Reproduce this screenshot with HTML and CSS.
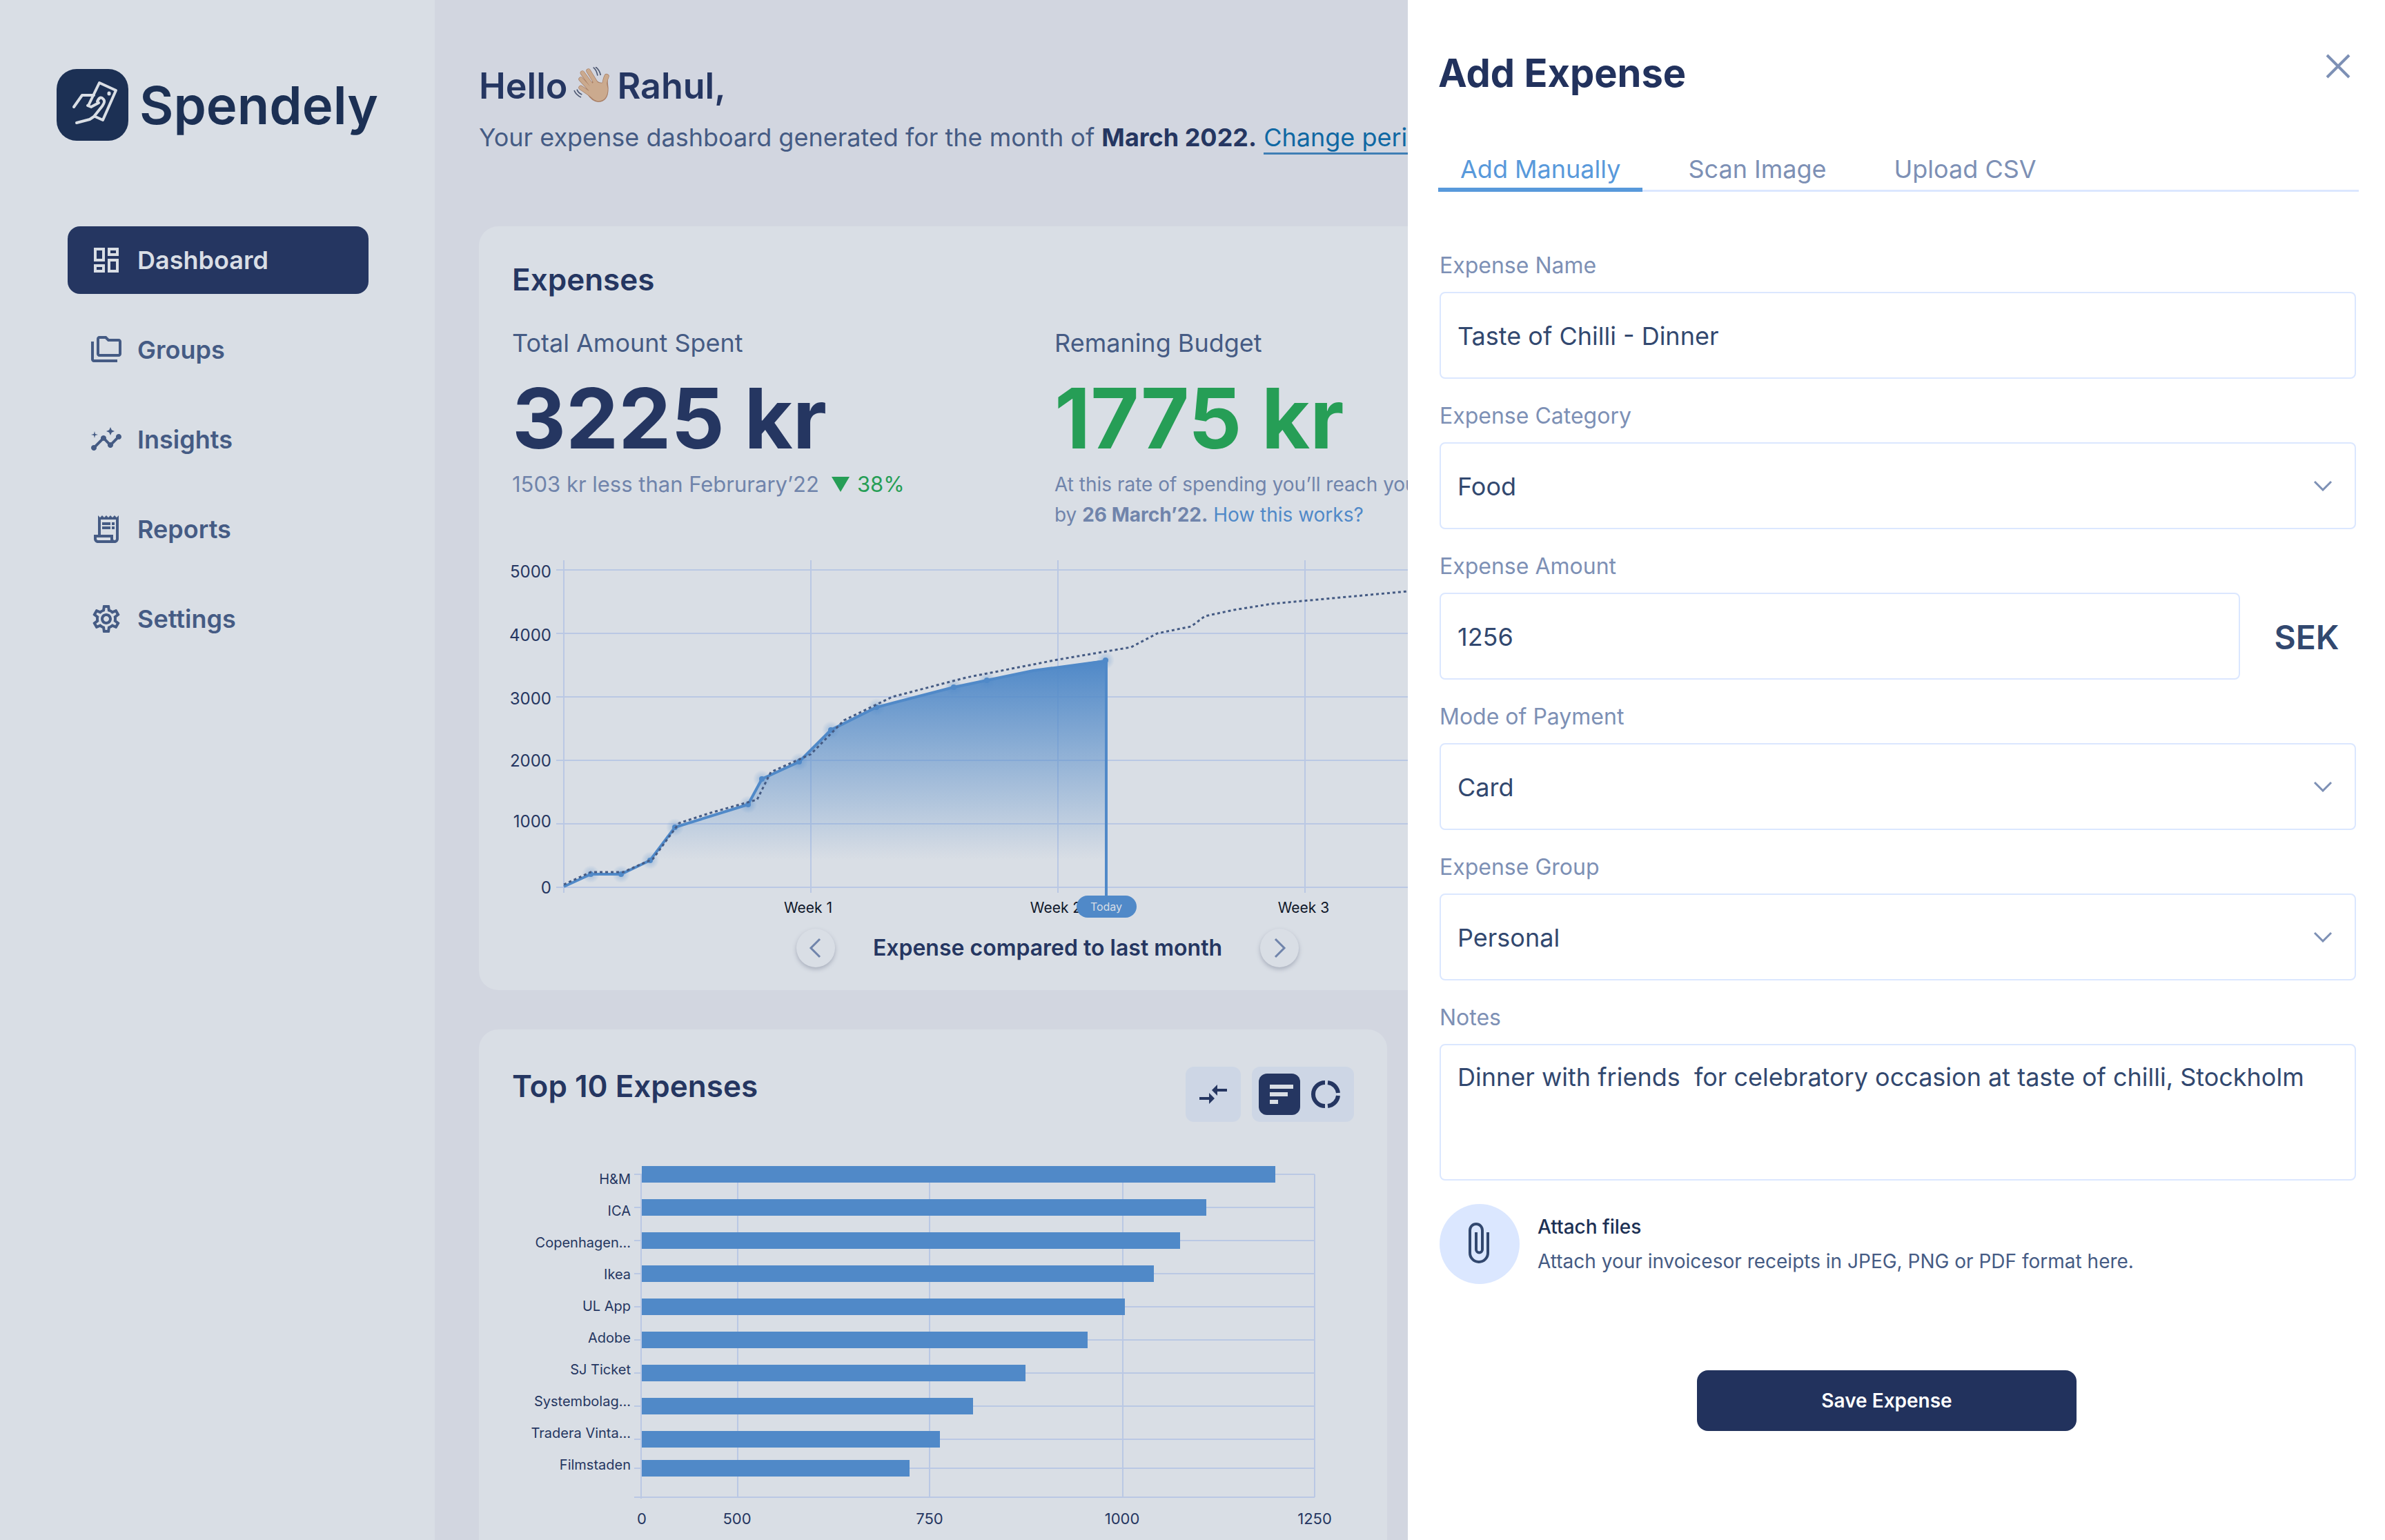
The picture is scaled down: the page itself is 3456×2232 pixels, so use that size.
FILE: index.html
```html
<!DOCTYPE html>
<html lang="en">
<head>
<meta charset="utf-8">
<title>Spendely – Add Expense</title>
<link rel="stylesheet" href="styles.css">
</head>
<body>
<div class="app">
  <aside class="sidebar">
    <a class="brand" href="#">
      <svg class="brand-mark" viewBox="0 0 104 104" aria-hidden="true">
        <rect width="104" height="104" rx="29" fill="#1c3054"/>
        <g fill="none" stroke="#d9dee5" stroke-width="4" stroke-linecap="round" stroke-linejoin="round">
          <path d="M25 55 37 38Q38 38 41 38H54"/>
          <path d="M46 53 62 20 86 31 67 74 56 69"/>
          <path d="M29 78 48 73 54 69 66 54Q71 47 68 44 63 38 59 47L61 49 50 55 45 53"/>
          <path d="M76 35v1" stroke-width="5"/>
        </g>
      </svg>
      <span>Spendely</span>
    </a>
    <nav class="nav">
      <a class="nav-item active" href="#"><svg viewBox="0 0 24 24"><path d="M19 5v2h-4V5h4M9 5v6H5V5h4m10 8v6h-4v-6h4M9 17v2H5v-2h4M21 3h-8v6h8V3zM11 3H3v10h8V3zm10 8h-8v10h8V11zm-10 4H3v6h8v-6z"/></svg>Dashboard</a>
      <a class="nav-item" href="#"><svg viewBox="0 0 24 24"><path d="M3 6H1v13c0 1.100.9 2 2 2h17v-2H3V6zm18-2h-7l-2-2H7c-1.100 0-1.990.9-1.990 2L5 15c0 1.100.9 2 2 2h14c1.100 0 2-.9 2-2V6c0-1.100-.9-2-2-2zm0 11H7V4h4.170l2 2H21v9z"/></svg>Groups</a>
      <a class="nav-item" href="#"><svg viewBox="0 0 24 24"><path d="M21 8c-1.450 0-2.260 1.440-1.930 2.510l-3.550 3.560c-.3-.09-.74-.09-1.040 0l-2.550-2.550C12.270 10.450 11.460 9 10 9c-1.450 0-2.270 1.440-1.930 2.520l-4.560 4.550C2.440 15.740 1 16.550 1 18c0 1.100.9 2 2 2 1.450 0 2.260-1.440 1.930-2.510l4.550-4.560c.3.09.74.09 1.040 0l2.550 2.550C12.730 16.550 13.540 18 15 18c1.450 0 2.270-1.440 1.930-2.520l3.560-3.550C21.560 12.260 23 11.450 23 10c0-1.100-.9-2-2-2z"/><path d="m15 9 .94-2.070L18 6l-2.060-.93L15 3l-.92 2.070L12 6l2.080.93zM3.500 11 4 9l2-.5L4 8l-.5-2L3 8l-2 .5L3 9z"/></svg>Insights</a>
      <a class="nav-item" href="#"><svg viewBox="0 0 24 24"><path d="M19.500 3.500 18 2l-1.500 1.500L15 2l-1.500 1.500L12 2l-1.500 1.500L9 2 7.500 3.500 6 2v14H3v3c0 1.660 1.340 3 3 3h12c1.660 0 3-1.340 3-3V2l-1.500 1.500zM15 20H6c-.55 0-1-.45-1-1v-1h10v2zm4-1c0 .55-.45 1-1 1s-1-.45-1-1v-3H8V5h11v14z"/><path d="M9 7h6v2H9zM16 7h2v2h-2zM9 10h6v2H9zM16 10h2v2h-2z"/></svg>Reports</a>
      <a class="nav-item" href="#"><svg viewBox="0 0 24 24"><path d="M19.430 12.980c.04-.32.07-.64.07-.98 0-.34-.03-.66-.07-.98l2.110-1.650c.19-.15.24-.42.12-.64l-2-3.460c-.09-.16-.26-.25-.44-.25-.06 0-.12.01-.17.03l-2.490 1c-.52-.4-1.080-.73-1.690-.98l-.38-2.650C14.460 2.180 14.250 2 14 2h-4c-.25 0-.46.18-.49.42l-.38 2.650c-.61.25-1.170.59-1.690.98l-2.490-1c-.06-.02-.12-.03-.18-.03-.17 0-.34.09-.43.25l-2 3.460c-.13.22-.07.49.12.64l2.110 1.650c-.04.32-.07.65-.07.98 0 .33.03.66.07.98l-2.110 1.650c-.19.15-.24.42-.12.64l2 3.460c.09.16.26.25.44.25.06 0 .12-.01.17-.03l2.490-1c.52.4 1.080.73 1.690.98l.38 2.650c.03.24.24.42.49.42h4c.25 0 .46-.18.49-.42l.38-2.650c.61-.25 1.170-.59 1.690-.98l2.490 1c.06.02.12.03.18.03.17 0 .34-.09.43-.25l2-3.460c.12-.22.07-.49-.12-.64l-2.110-1.650zm-1.980-1.710c.04.31.05.52.05.73 0 .21-.02.43-.05.73l-.14 1.130.89.7 1.080.84-.7 1.210-1.270-.51-1.040-.42-.9.68c-.43.32-.84.56-1.250.73l-1.060.43-.16 1.130-.2 1.350h-1.400l-.19-1.350-.16-1.130-1.060-.43c-.43-.18-.83-.41-1.230-.71l-.91-.7-1.060.43-1.270.51-.7-1.210 1.080-.84.89-.7-.14-1.130c-.03-.31-.05-.54-.05-.74s.02-.43.05-.73l.14-1.130-.89-.7-1.080-.84.7-1.210 1.270.51 1.040.42.9-.68c.43-.32.84-.56 1.250-.73l1.060-.43.16-1.130.2-1.350h1.390l.19 1.350.16 1.130 1.060.43c.43.18.83.41 1.230.71l.91.7 1.060-.43 1.270-.51.7 1.210-1.070.85-.89.7.14 1.130zM12 8c-2.210 0-4 1.790-4 4s1.790 4 4 4 4-1.790 4-4-1.790-4-4-4zm0 6c-1.100 0-2-.9-2-2s.9-2 2-2 2 .9 2 2-.9 2-2 2z"/></svg>Settings</a>
    </nav>
  </aside>

  <main class="main">
    <header class="greeting">
      <h1>Hello
        <svg class="wave" viewBox="36 36 168 168" role="img" aria-label="waving hand">
          <g fill="none" stroke-linecap="round">
            <path d="M104 53 140 112M78 62 122 122M71 89 116 138M71 126 120 160" stroke="#a87f66" stroke-width="20"/>
            <path d="M183 77Q174 96 172 130" stroke="#a87f66" stroke-width="22"/>
          </g>
          <path d="M98 118 134 88Q146 106 164 104L188 84Q188 108 191 128 192 188 145 189 118 186 98 154Z" fill="#a87f66"/>
          <g fill="none" stroke="#cbaa8e" stroke-linecap="round">
            <path d="M104 53 140 112M78 62 122 122M71 89 116 138M71 126 120 160" stroke-width="16"/>
            <path d="M183 77Q174 96 172 130" stroke-width="18"/>
          </g>
          <path d="M108 122 132 96Q146 108 166 106L182 100Q184 114 188 130 188 184 145 185 122 180 104 152Z" fill="#cbaa8e"/>
          <path d="M125 38Q139 48 144 74M135 36Q152 48 157 72M42 138Q50 158 72 168M54 134Q60 150 76 156" fill="none" stroke="#4d5872" stroke-width="5"/>
        </svg>
        Rahul,</h1>
      <p>Your expense dashboard generated for the month of <strong>March 2022.</strong> <a href="#">Change period</a></p>
    </header>

    <section class="card">
      <h2>Expenses</h2>
      <div class="stats">
        <div class="stat">
          <p class="stat-label">Total Amount Spent</p>
          <p class="stat-value">3225 kr</p>
          <p class="stat-note">1503 kr less than Februrary’22 <span class="trend"><svg viewBox="0 0 26 22" aria-hidden="true"><path d="M0 0H26L13 22Z"/></svg>38%</span></p>
        </div>
        <div class="stat">
          <p class="stat-label">Remaning Budget</p>
          <p class="stat-value good">1775 kr</p>
          <p class="stat-hint">At this rate of spending you’ll reach your budget<br>by <strong>26 March’22.</strong> <a href="#">How this works?</a></p>
        </div>
      </div>
      <svg class="trend-chart" viewBox="742 800 1900 540" role="img" aria-label="Expense compared to last month">
        <defs>
          <linearGradient id="fill" gradientUnits="userSpaceOnUse" x1="0" y1="960" x2="0" y2="1247">
            <stop offset="0" stop-color="#5089c8"/><stop offset="1" stop-color="#5089c8" stop-opacity="0"/>
          </linearGradient>
          <radialGradient id="glow"><stop offset="0" stop-color="#5089c8" stop-opacity=".4"/><stop offset="1" stop-color="#5089c8" stop-opacity="0"/></radialGradient>
        </defs>
        <path class="grid" d="M806 826H2640M806 918H2640M806 1010H2640M806 1102H2640M806 1194H2640M806 1286H2640M817 812V1294M1175 812V1294M1533 812V1294M1891 812V1294M2249 812V1294"/>
        <g class="y-labels"><text x="799" y="837">5000</text><text x="799" y="929">4000</text><text x="799" y="1021">3000</text><text x="799" y="1111">2000</text><text x="799" y="1199">1000</text><text x="799" y="1295">0</text></g>
        <g class="week-labels"><text x="1171" y="1323">Week 1</text><text x="1530" y="1323">Week 2</text><text x="1889" y="1323">Week 3</text></g>
        <path fill="url(#fill)" d="M817 1285 856 1267H900L942 1247 978 1199 1084 1166 1104 1129 1158 1104 1204 1058 1270 1025 1382 996 1430 986 1497 972 1602 956V1285Z"/>
        <g fill="url(#glow)"><circle cx="856" cy="1267" r="13"/><circle cx="900" cy="1267" r="13"/><circle cx="942" cy="1247" r="13"/><circle cx="978" cy="1199" r="13"/><circle cx="1084" cy="1166" r="13"/><circle cx="1104" cy="1129" r="13"/><circle cx="1158" cy="1104" r="13"/><circle cx="1204" cy="1058" r="13"/><circle cx="1270" cy="1025" r="13"/><circle cx="1382" cy="996" r="13"/><circle cx="1430" cy="986" r="13"/><circle cx="1602" cy="957" r="13"/></g>
        <path class="spend" d="M817 1285 856 1267H900L942 1247 978 1199 1084 1166 1104 1129 1158 1104 1204 1058 1270 1025 1382 996 1430 986 1497 972 1602 958"/>
        <path class="spend" d="M1603 957V1300"/>
        <g fill="#5089c8"><circle cx="856" cy="1267" r="4"/><circle cx="900" cy="1267" r="4"/><circle cx="942" cy="1247" r="4"/><circle cx="978" cy="1199" r="4"/><circle cx="1084" cy="1166" r="4"/><circle cx="1104" cy="1129" r="4"/><circle cx="1158" cy="1104" r="4"/><circle cx="1204" cy="1058" r="4"/><circle cx="1270" cy="1025" r="4"/><circle cx="1382" cy="996" r="4"/><circle cx="1430" cy="986" r="4"/><circle cx="1602" cy="957" r="4"/></g>
        <path class="previous" d="M817 1282 856 1264H903L946 1245 984 1193 1030 1178 1097 1159 1117 1119 1175 1093 1223 1044 1293 1010 1400 982 1533 956 1639 938 1677 918 1726 908 1746 893 1788 884 1844 875 2040 857 2249 840"/>
        <rect x="1560" y="1298" width="87" height="32" rx="16" fill="#5089c8"/>
        <text class="today" x="1603" y="1320">Today</text>
      </svg>
      <div class="pager">
        <button type="button" aria-label="Previous chart"><svg viewBox="0 0 56 56"><path d="M34 15 21 28 34 41"/></svg></button>
        <span>Expense compared to last month</span>
        <button type="button" aria-label="Next chart"><svg viewBox="0 0 56 56"><path d="M22 15 35 28 22 41"/></svg></button>
      </div>
    </section>

    <section class="card top-card">
      <div class="card-head">
        <h2>Top 10 Expenses</h2>
        <div class="tools">
          <button class="tool" type="button" aria-label="Compare"><svg viewBox="0 0 24 24"><path d="M9.010 14H2v2h7.010v3L13 15l-3.990-4v3zm5.980-1v-3H22V8h-7.010V5L11 9l3.990 4z"/></svg></button>
          <div class="toggle">
            <button class="view on" type="button" aria-label="Bar chart"><svg viewBox="0 0 60 60"><path d="M16 16h34v6H16zM16 27h26v6H16zM16 38h12v6H16z"/></svg></button>
            <button class="view" type="button" aria-label="Donut chart"><svg viewBox="0 0 60 60"><g fill="none" stroke="#253661" stroke-width="6"><path d="M32 13A17 17 0 0 1 47 28M47 32A17 17 0 0 1 32 47M28 47A17 17 0 0 1 28 13"/></g></svg></button>
          </div>
        </div>
      </div>
      <svg class="bar-chart" viewBox="742 1626 1220 600" role="img" aria-label="Top 10 expenses by amount">
        <path class="grid" d="M919 1702H1905M919 1750H1905M919 1798H1905M919 1846H1905M919 1894H1905M919 1942H1905M919 1990H1905M919 2038H1905M919 2086H1905M919 2128H1905M919 2170H1905M929 1702V2172M1069 1702V2170M1347 1702V2170M1627 1702V2170M1905 1702V2170"/>
        <g fill="#5089c8"><rect x="930" y="1690" width="918" height="24"/><rect x="930" y="1738" width="818" height="24"/><rect x="930" y="1786" width="780" height="24"/><rect x="930" y="1834" width="742" height="24"/><rect x="930" y="1882" width="700" height="24"/><rect x="930" y="1930" width="646" height="24"/><rect x="930" y="1978" width="556" height="24"/><rect x="930" y="2026" width="480" height="24"/><rect x="930" y="2074" width="432" height="24"/><rect x="930" y="2116" width="388" height="24"/></g>
        <g class="bar-labels"><text x="914" y="1716">H&amp;M</text><text x="914" y="1762">ICA</text><text x="914" y="1808">Copenhagen...</text><text x="914" y="1854">Ikea</text><text x="914" y="1900">UL App</text><text x="914" y="1946">Adobe</text><text x="914" y="1992">SJ Ticket</text><text x="914" y="2038">Systembolag...</text><text x="914" y="2084">Tradera Vinta...</text><text x="914" y="2130">Filmstaden</text></g>
        <g class="x-labels"><text x="930" y="2209">0</text><text x="1068" y="2209">500</text><text x="1347" y="2209">750</text><text x="1626" y="2209">1000</text><text x="1905" y="2209">1250</text></g>
      </svg>
    </section>
  </main>

  <aside class="drawer" role="dialog" aria-labelledby="drawer-title">
    <header class="drawer-head">
      <h2 id="drawer-title">Add Expense</h2>
      <button type="button" aria-label="Close"><svg viewBox="0 0 36 36"><path d="M2 2 34 34M34 2 2 34"/></svg></button>
    </header>
    <div class="tabs" role="tablist">
      <button class="tab selected" type="button" role="tab" aria-selected="true">Add Manually</button>
      <button class="tab" type="button" role="tab">Scan Image</button>
      <button class="tab" type="button" role="tab">Upload CSV</button>
    </div>
    <form class="form">
      <div class="field"><label for="name">Expense Name</label><input class="control" id="name" type="text" value="Taste of Chilli - Dinner"></div>
      <div class="field"><label for="category">Expense Category</label>
        <div class="select"><select class="control" id="category"><option>Food</option></select><svg viewBox="0 0 28 16"><path d="M2 2 14 14 26 2"/></svg></div></div>
      <div class="field"><label for="amount">Expense Amount</label>
        <div class="amount"><input class="control" id="amount" type="text" value="1256"><span>SEK</span></div></div>
      <div class="field"><label for="mode">Mode of Payment</label>
        <div class="select"><select class="control" id="mode"><option>Card</option></select><svg viewBox="0 0 28 16"><path d="M2 2 14 14 26 2"/></svg></div></div>
      <div class="field"><label for="group">Expense Group</label>
        <div class="select"><select class="control" id="group"><option>Personal</option></select><svg viewBox="0 0 28 16"><path d="M2 2 14 14 26 2"/></svg></div></div>
      <div class="field"><label for="notes">Notes</label><textarea class="control" id="notes">Dinner with friends  for celebratory occasion at taste of chilli, Stockholm</textarea></div>
      <div class="attach">
        <button type="button" aria-label="Attach files"><svg viewBox="0 0 116 116"><path d="M70 41V71A13 13 0 0 1 44 71V38A9 9 0 0 1 62 38V66A4.500 4.500 0 0 1 53 66V41"/></svg></button>
        <div><p class="attach-title">Attach files</p><p class="attach-text">Attach your invoicesor receipts in JPEG, PNG or PDF format here.</p></div>
      </div>
      <button class="save" type="submit">Save Expense</button>
    </form>
  </aside>
</div>
</body>
</html>
```
FILE: styles.css
```css
* { box-sizing: border-box; }
body {
  margin: 0;
  font-family: Inter, "Liberation Sans", sans-serif;
  color: #253661;
  background: #d2d6e0;
}
h1, h2, p { margin: 0; }
a { color: inherit; text-decoration: none; }
button { padding: 0; border: 0; background: none; font: inherit; color: inherit; cursor: pointer; }
svg { display: block; }

.app { display: flex; height: 100vh; overflow: hidden; position: relative; }

/* Sidebar */
.sidebar { flex: none; width: 630px; padding: 100px 82px; background: #d9dee5; }
.brand { display: flex; align-items: center; gap: 16px; font-size: 76px; line-height: 104px; font-weight: 600; color: #1c3054; }
.brand-mark { flex: none; width: 104px; height: 104px; }
.nav { display: flex; flex-direction: column; gap: 32px; margin: 124px -4px 0 16px; }
.nav-item { display: flex; align-items: center; gap: 21px; width: 436px; height: 98px; padding: 0 32px; border-radius: 18px; font-size: 36px; line-height: 48px; font-weight: 600; color: #455b84; }
.nav-item svg { width: 48px; height: 48px; fill: currentColor; }
.nav-item.active { background: #253661; color: #d9dee5; }

/* Dashboard */
.main { flex: 1; min-width: 0; padding: 93px 64px 0; display: flex; flex-direction: column; }
.greeting { margin-bottom: 105px; white-space: nowrap; }
.greeting h1 { display: flex; align-items: center; gap: 8px; margin-bottom: 18px; font-size: 52px; line-height: 64px; font-weight: 600; }
.wave { width: 56px; height: 56px; }
.greeting p { font-size: 36px; line-height: 48px; color: #455b84; }
.greeting strong { color: #253661; }
.greeting a { color: #0f68a3; border-bottom: 3px solid #3f7fb5; }
.card { flex: none; padding: 49px 48px 33px; border-radius: 28px; background: #d9dee5; }
.card h2 { font-size: 44px; line-height: 56px; font-weight: 600; }
.stats { display: flex; margin-top: 40px; white-space: nowrap; }
.stat { flex: none; width: 786px; height: 295px; }
.stat-label { font-size: 36px; line-height: 48px; color: #455b84; }
.stat-value { margin: 25px 0 14px; font-size: 121px; line-height: 120px; font-weight: 700; }
.stat-value.good { color: #269e56; }
.stat-note { display: flex; gap: 18px; font-size: 31px; line-height: 44px; color: #7084ab; }
.trend { display: flex; align-items: center; gap: 11px; color: #269e56; }
.trend svg { width: 26px; height: 22px; fill: currentColor; }
.stat-hint { font-size: 28px; line-height: 44px; color: #7084ab; }
.stat-hint a { color: #5089c8; }
.trend-chart { width: 1900px; height: 540px; margin-top: 32px; overflow: visible; }
.grid { fill: none; stroke: #bac8e4; stroke-width: 2; }
.spend { fill: none; stroke: #5089c8; stroke-width: 4; }
.previous { fill: none; stroke: #455b84; stroke-width: 3; stroke-dasharray: 4 4; }
.y-labels { font-size: 24px; fill: #253661; text-anchor: end; }
.week-labels { font-size: 21px; fill: #0f172a; text-anchor: middle; }
.today { font-size: 16px; fill: #d9dee5; text-anchor: middle; }
.pager { display: flex; align-items: center; margin: 6px 0 0 412px; font-size: 32px; line-height: 56px; font-weight: 600; }
.pager span { width: 616px; text-align: center; white-space: nowrap; }
.pager button { width: 56px; height: 56px; border-radius: 50%; background: #d9dee5; box-shadow: 0 3px 6px #a9afbd; }
.pager svg { fill: none; stroke: #7084ab; stroke-width: 3; }

.top-card { width: 1316px; margin-top: 57px; padding: 54px 48px 48px; }
.card-head { display: flex; justify-content: space-between; align-items: flex-start; }
.tools { display: flex; gap: 16px; }
.tool { display: grid; place-items: center; width: 80px; height: 80px; border-radius: 12px; background: #cdd6e5; }
.tool svg { width: 48px; height: 48px; fill: #253661; }
.toggle { display: flex; gap: 8px; padding: 10px; border-radius: 12px; background: #cdd6e5; }
.view { width: 60px; height: 60px; border-radius: 12px; }
.view.on { background: #253661; }
.view svg { fill: #d9dee5; }
.bar-chart { width: 100%; }
.bar-labels { font-size: 20px; fill: #253661; text-anchor: end; }
.x-labels { font-size: 22px; fill: #253661; text-anchor: middle; }

/* Add expense drawer, slides over the dashboard */
.drawer { position: absolute; top: 0; right: 0; bottom: 0; width: 1416px; padding: 70px 38px 0 44px; background: #fff; }
.drawer-head { display: flex; justify-content: space-between; align-items: flex-start; padding-right: 12px; }
.drawer-head h2 { font-size: 56px; line-height: 72px; font-weight: 700; color: #22325d; }
.drawer-head button { margin-top: 8px; }
.drawer-head svg { width: 36px; height: 36px; fill: none; stroke: #7d90b5; stroke-width: 4; }
.tabs { display: flex; gap: 34px; margin-top: 73px; border-bottom: 3px solid #dbe7ff; }
.tab { height: 63px; margin-bottom: -3px; padding: 2px 32px 0; border-bottom: 6px solid transparent; font-size: 36px; line-height: 48px; color: #7d90b5; }
.tab.selected { color: #5899db; border-color: #5899db; }
.form { display: flex; flex-direction: column; gap: 34px; margin-top: 87px; padding: 0 4px 0 2px; }
.field { display: flex; flex-direction: column; gap: 18px; }
.field label { font-size: 32px; line-height: 40px; color: #7d90b5; }
.control { display: block; width: 100%; height: 126px; margin: 0; padding: 2px 24px 0; border: 2px solid #dbe7ff; border-radius: 8px; outline: 0; background: #fff; font: 36px/44px Inter, "Liberation Sans", sans-serif; color: #32486f; appearance: none; }
textarea.control { height: 198px; padding-top: 24px; resize: none; overflow: hidden; }
.select { display: grid; align-items: center; }
.select > * { grid-area: 1 / 1; }
.select svg { justify-self: end; width: 28px; height: 16px; margin-right: 34px; fill: none; stroke: #7d90b5; stroke-width: 3; pointer-events: none; }
.amount { display: flex; align-items: center; }
.amount .control { flex: 1; min-width: 0; }
.amount span { width: 168px; padding: 2px 2px 0 27px; text-align: center; font-size: 48px; font-weight: 600; color: #32486f; }
.attach { display: flex; align-items: center; gap: 26px; }
.attach button { flex: none; width: 116px; height: 116px; border-radius: 50%; background: #dbe7ff; }
.attach svg { fill: none; stroke: #32486f; stroke-width: 4; }
.attach-title { font-size: 28px; line-height: 50px; font-weight: 500; color: #1c3054; }
.attach-text { font-size: 28px; line-height: 50px; color: #455b84; }
.save { align-self: center; width: 550px; height: 88px; margin: 91px 32px 0 0; border-radius: 16px; background: #22325d; color: #fff; font-size: 28px; font-weight: 600; }
```
